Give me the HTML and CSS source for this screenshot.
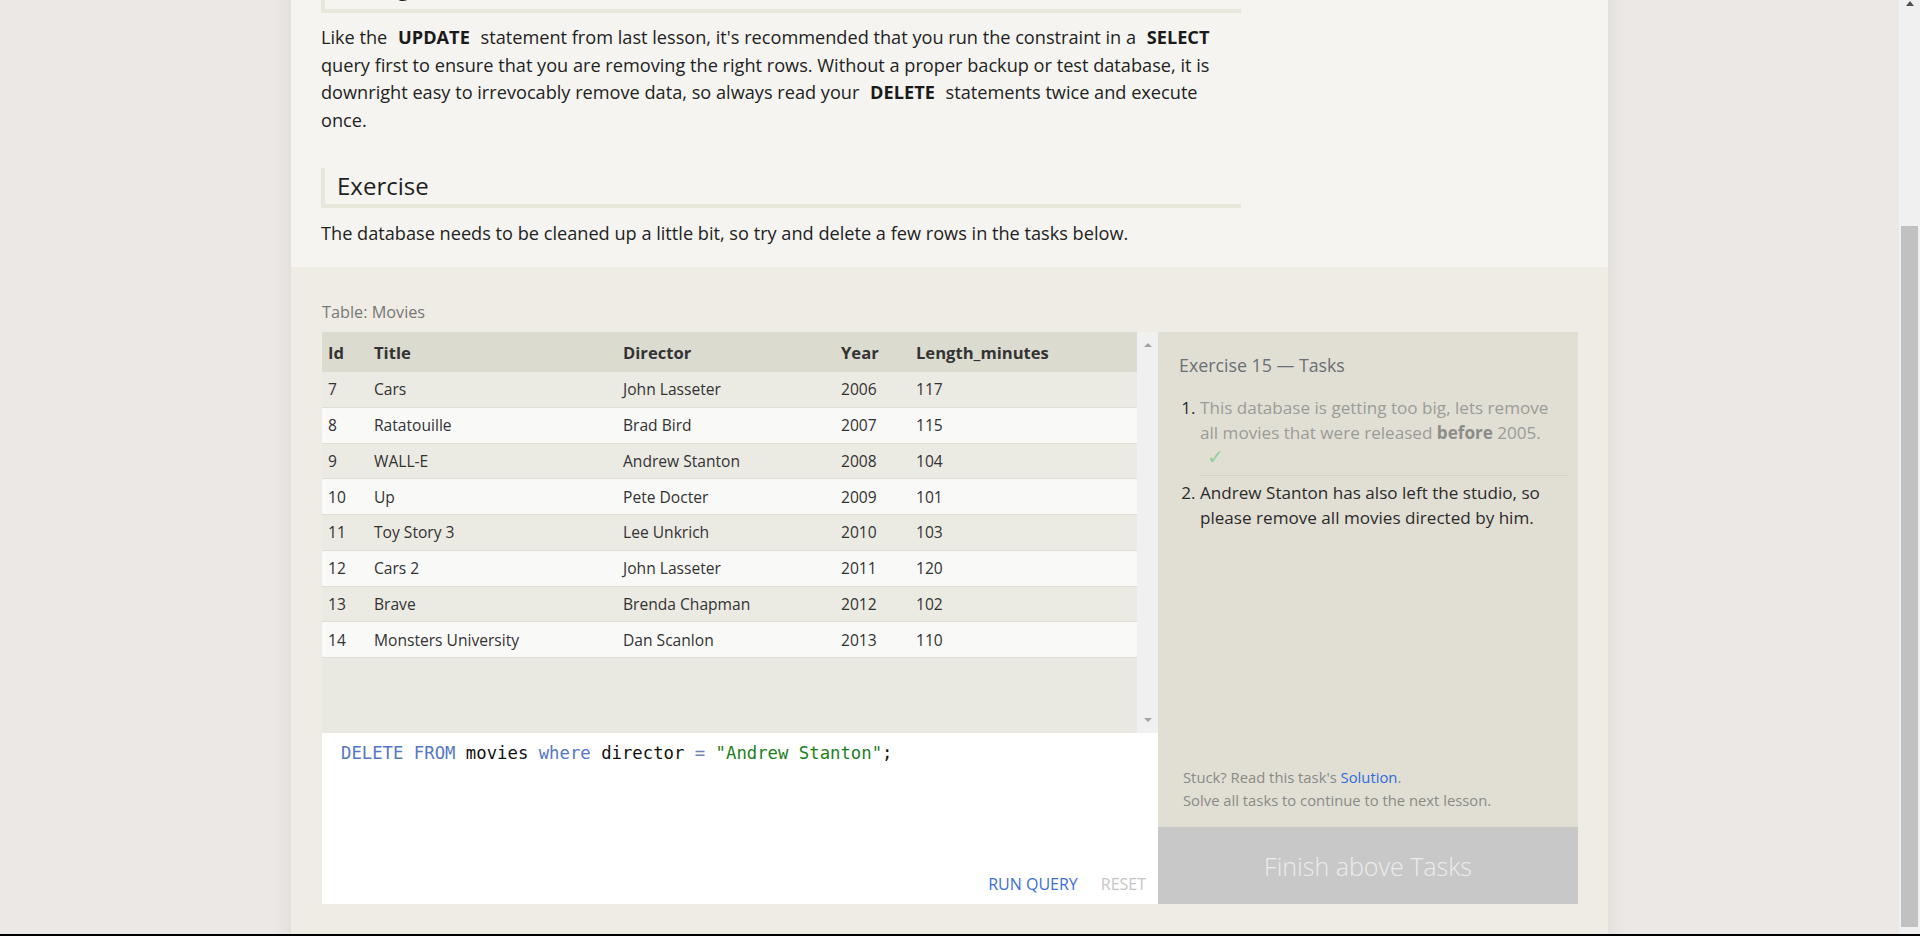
FILE: index.html
```html
<!DOCTYPE html>
<html lang="en">
<head>
<meta charset="utf-8">
<title>SQL Lesson 15: Deleting rows</title>
<link rel="stylesheet" href="styles.css">
</head>
<body>
<div class="screen">
  <div class="viewport">
    <div class="page-wrap">
      <main class="page">
        <section class="lesson">
          <div class="lesson-inner">
            <h2 class="section-title prev">Taking care</h2>
            <p class="text">Like the <code>UPDATE</code> statement from last lesson, it's recommended that you run the constraint in a <code>SELECT</code> query first to ensure that you are removing the right rows. Without a proper backup or test database, it is downright easy to irrevocably remove data, so always read your <code>DELETE</code> statements twice and execute once.</p>
            <h2 class="section-title">Exercise</h2>
            <p class="text">The database needs to be cleaned up a little bit, so try and delete a few rows in the tasks below.</p>
          </div>
        </section>
        <section class="exercise">
          <div class="table-label">Table: Movies</div>
          <div class="workspace">
            <div class="left-col">
              <div class="table-scroll">
                <div class="table-area">
                  <table class="movies">
                    <colgroup>
                      <col class="c-id"><col class="c-title"><col class="c-dir"><col class="c-year"><col class="c-len">
                    </colgroup>
                    <thead>
                      <tr><th>Id</th><th>Title</th><th>Director</th><th>Year</th><th>Length_minutes</th></tr>
                    </thead>
                    <tbody>
                      <tr><td>7</td><td>Cars</td><td>John Lasseter</td><td>2006</td><td>117</td></tr>
                      <tr><td>8</td><td>Ratatouille</td><td>Brad Bird</td><td>2007</td><td>115</td></tr>
                      <tr><td>9</td><td>WALL-E</td><td>Andrew Stanton</td><td>2008</td><td>104</td></tr>
                      <tr><td>10</td><td>Up</td><td>Pete Docter</td><td>2009</td><td>101</td></tr>
                      <tr><td>11</td><td>Toy Story 3</td><td>Lee Unkrich</td><td>2010</td><td>103</td></tr>
                      <tr><td>12</td><td>Cars 2</td><td>John Lasseter</td><td>2011</td><td>120</td></tr>
                      <tr><td>13</td><td>Brave</td><td>Brenda Chapman</td><td>2012</td><td>102</td></tr>
                      <tr><td>14</td><td>Monsters University</td><td>Dan Scanlon</td><td>2013</td><td>110</td></tr>
                    </tbody>
                  </table>
                </div>
                <div class="vscroll">
                  <span class="tri-up light"></span>
                  <span class="tri-down light"></span>
                </div>
              </div>
              <div class="editor">
                <pre class="code"><span class="kw">DELETE</span> <span class="kw">FROM</span> movies <span class="kw">where</span> director <span class="op">=</span> <span class="str">"Andrew Stanton"</span>;</pre>
                <div class="editor-actions">
                  <span class="run">RUN QUERY</span>
                  <span class="reset">RESET</span>
                </div>
              </div>
            </div>
            <aside class="tasks">
              <div class="tasks-body">
                <h3 class="tasks-title">Exercise 15 — Tasks</h3>
                <ol class="task-list">
                  <li class="done"><span class="done-text">This database is getting too big, lets remove all movies that were released <strong>before</strong> 2005.</span><span class="check">✓</span></li>
                  <li>Andrew Stanton has also left the studio, so please remove all movies directed by him.</li>
                </ol>
              </div>
              <div class="tasks-foot">
                <p class="hint">Stuck? Read this task's <span class="link">Solution</span>.<br>Solve all tasks to continue to the next lesson.</p>
                <div class="finish">Finish above Tasks</div>
              </div>
            </aside>
          </div>
        </section>
      </main>
    </div>
    <div class="scrollbar">
      <span class="tri-up dark"></span>
      <div class="thumb"></div>
    </div>
  </div>
  <div class="bottom-bar"></div>
</div>
</body>
</html>
```

FILE: styles.css
```css
html, body {
  margin: 0;
  padding: 0;
}

body {
  background: #ece8e5;
  font-family: "Open Sans", "Liberation Sans", sans-serif;
  color: #222;
}

.screen {
  height: 936px;
  display: flex;
  flex-direction: column;
  overflow: hidden;
}

.viewport {
  flex: 1;
  min-height: 0;
  display: flex;
  overflow: hidden;
}

.page-wrap {
  flex: 1;
  min-width: 0;
}

.page {
  width: 1317px;
  margin: 0 auto;
  box-shadow: 0 0 22px rgba(0, 0, 0, 0.07);
}

/* ---------- lesson text ---------- */
.lesson {
  background: #f5f4f0;
  padding: 0 30px 19.5px;
}

.lesson-inner {
  width: 920px;
}

.section-title {
  margin: 34px 0 12px;
  padding-left: 12px;
  border-left: 4px solid #e8e7dc;
  border-bottom: 4px solid #e8e7dc;
  font-size: 24px;
  font-weight: 400;
  line-height: 36px;
  color: #1f1f1f;
}

.section-title.prev {
  margin-top: -27px;
  margin-bottom: 11px;
  line-height: 26px;
  padding-bottom: 10px;
}

.text {
  margin: 0;
  font-size: 18.16px;
  line-height: 27.5px;
  color: #222;
}

.text code {
  font-family: inherit;
  font-weight: 700;
  padding: 0 6px;
  color: #1a1a1a;
}

/* ---------- exercise ---------- */
.exercise {
  background: #efece5;
  padding: 34px 30px 40px 31px;
}

.table-label {
  font-size: 16.25px;
  line-height: 22px;
  color: #777;
  margin-bottom: 9px;
}

.workspace {
  display: flex;
  width: 1256px;
}

.left-col {
  width: 836px;
  display: flex;
  flex-direction: column;
}

.table-scroll {
  height: 401px;
  display: flex;
  background: #e9e8e1;
}

.table-area {
  flex: 1;
  min-width: 0;
}

.movies {
  width: 815px;
  table-layout: fixed;
  border-collapse: separate;
  border-spacing: 0;
}

.c-id { width: 46px; }
.c-title { width: 249px; }
.c-dir { width: 218px; }
.c-year { width: 75px; }
.c-len { width: 227px; }

.movies th {
  height: 40px;
  padding: 0 6px;
  text-align: left;
  font-size: 16.6px;
  font-weight: 700;
  color: #333;
  background: #dcdbd0;
  box-sizing: border-box;
}

.movies td {
  height: 35.75px;
  padding: 0 6px;
  box-sizing: border-box;
  font-size: 15.6px;
  color: #333;
  border-bottom: 1.5px solid #dfded7;
  white-space: nowrap;
}

.movies tbody tr:nth-child(odd) td {
  background: #ebeae3;
}

.movies tbody tr:nth-child(even) td {
  background: #f9f9f8;
}

.vscroll {
  width: 21px;
  background: #f0f0f0;
  display: flex;
  flex-direction: column;
  align-items: center;
  justify-content: space-between;
  padding: 11px 0 11px;
  box-sizing: border-box;
}

.tri-up,
.tri-down {
  display: block;
  width: 0;
  height: 0;
  border-left: 4.5px solid transparent;
  border-right: 4.5px solid transparent;
}

.tri-up.light { border-bottom: 4px solid #a3a3a3; }
.tri-down.light { border-top: 4px solid #a3a3a3; }
.tri-up.dark { border-bottom: 5px solid #505050; }

.editor {
  height: 171px;
  background: #fff;
  display: flex;
  flex-direction: column;
  justify-content: space-between;
  box-sizing: border-box;
}

.code {
  margin: 0;
  padding: 8px 0 0 19px;
  font-family: "DejaVu Sans Mono", "Liberation Mono", monospace;
  font-size: 17.3px;
  line-height: 24px;
  color: #111;
}

.code .kw { color: #5577c4; }
.code .op { color: #6f7fb8; }
.code .str { color: #1d801d; }

.editor-actions {
  display: flex;
  justify-content: flex-end;
  gap: 23px;
  padding: 0 12px 9px 0;
  font-size: 16px;
  line-height: 22px;
}

.run { color: #3b6ed6; }
.reset { color: #c6c6c6; }

/* ---------- tasks ---------- */
.tasks {
  width: 420px;
  background: #e1dfd4;
  display: flex;
  flex-direction: column;
}

.tasks-body {
  flex: 1;
  padding: 21px 10px 0 21px;
}

.tasks-title {
  margin: 0 0 17px;
  font-size: 17.8px;
  font-weight: 400;
  line-height: 25px;
  color: #6b7076;
}

.task-list {
  margin: 0;
  padding-left: 21px;
  font-size: 17.1px;
  line-height: 25px;
  color: #2b2b2b;
}

.task-list li {
  padding: 4px 0 5px;
}

.task-list li:first-child {
  padding-top: 0;
}

.task-list li:not(:last-child) {
  border-bottom: 1px solid #d4d2c8;
}

.done-text {
  color: #9b9b98;
}

.done-text strong {
  color: #8c8c89;
}

.check {
  display: block;
  padding-left: 7px;
  color: #8fcf9c;
  font-family: "DejaVu Sans", sans-serif;
  font-size: 20px;
}

.tasks-foot {
  display: flex;
  flex-direction: column;
}

.hint {
  margin: 0 0 15.5px;
  padding-left: 25px;
  font-size: 14.8px;
  line-height: 23px;
  color: #8a8a86;
}

.link {
  color: #2c6be0;
}

.finish {
  height: 77px;
  background: #c8c8c8;
  color: #ececec;
  font-size: 25px;
  font-weight: 300;
  display: flex;
  align-items: center;
  justify-content: center;
}

/* ---------- browser chrome ---------- */
.scrollbar {
  width: 21px;
  flex: none;
  background: #f0f0f0;
  display: flex;
  flex-direction: column;
  align-items: center;
}

.scrollbar .tri-up {
  margin-top: 1px;
}

.thumb {
  width: 17px;
  height: 701px;
  margin-top: 220px;
  background: #c1c1c1;
}

.bottom-bar {
  height: 2px;
  background: #000;
  flex: none;
}
```
